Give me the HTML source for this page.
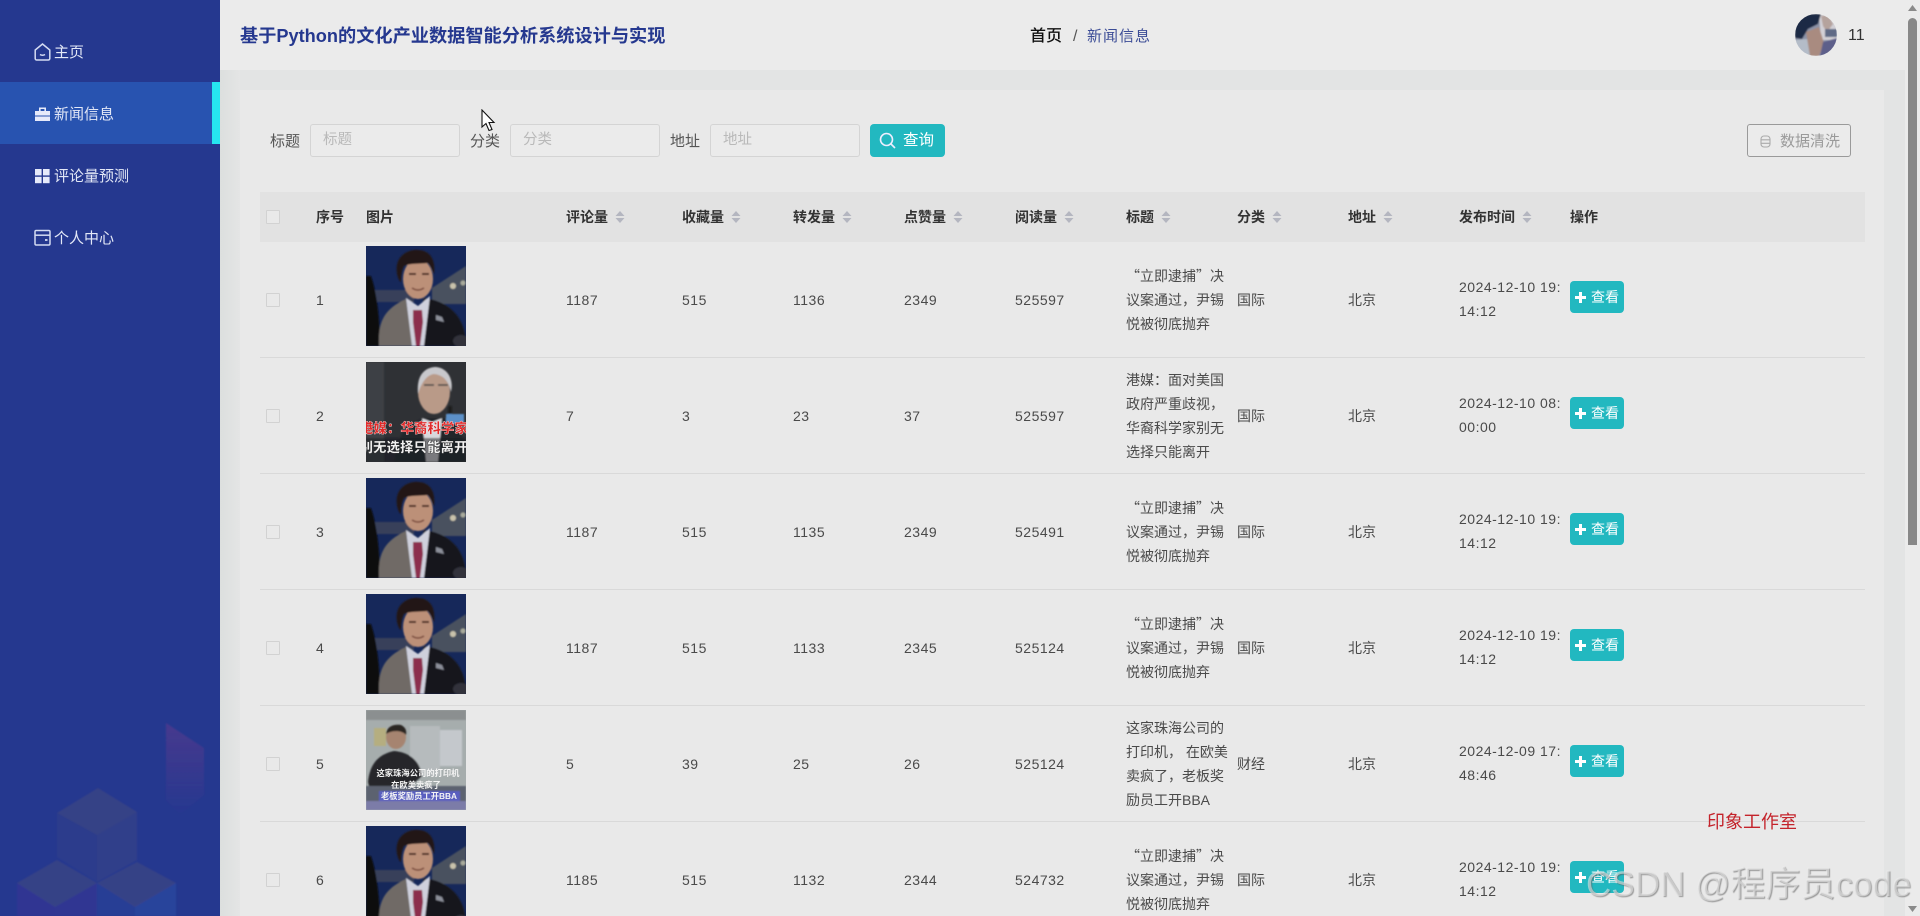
<!DOCTYPE html>
<html lang="zh-CN">
<head>
<meta charset="utf-8">
<title>新闻信息</title>
<style>
*{box-sizing:border-box}
html,body{margin:0;padding:0;width:1920px;height:916px;overflow:hidden;background:#e3e4e4;font-family:"Liberation Sans","Noto Sans CJK SC",sans-serif;font-size:14px;color:#4a4a4a}
.a{position:absolute;white-space:nowrap}
#side{left:0;top:0;width:220px;height:916px;background:#25388f;overflow:hidden}
.nav{position:absolute;left:0;width:220px;height:62px;line-height:65px;color:#e3e8f7;font-size:15px;padding-left:54px}
.nav.on{background:#2853b0}
.nav.on:after{content:"";position:absolute;right:0;top:0;width:8px;height:62px;background:#26e6f0}
.nav svg{position:absolute;left:34px;top:23px}
#shade{left:220px;top:70px;width:20px;height:846px;background:linear-gradient(90deg,#dcdfde,#e4e5e5)}
#head{left:220px;top:0;width:1685px;height:70px;background:#ebebeb}
#card{left:240px;top:90px;width:1644px;height:826px;background:#e9e9e9}
.lbl{position:absolute;top:124px;height:33px;line-height:36px;color:#555;font-size:15px}
.inp{position:absolute;top:124px;width:150px;height:33px;border:1px solid #d4d4d4;border-radius:3px;line-height:31px;padding-left:12px;color:#b9b9b9;background:#ebebeb;font-size:14.5px}
#thead{left:260px;top:192px;width:1605px;height:50px;background:#e2e2e2}
.th{position:absolute;top:192px;height:50px;line-height:51px;font-weight:bold;color:#333;font-size:14px}
.sort{display:inline-block;width:10px;height:14px;margin-left:7px;vertical-align:-2px}
.cb{position:absolute;left:266px;width:14px;height:14px;border:1px solid #d2d2d2;border-radius:1px;background:#e9e9e9}
.rl{position:absolute;left:260px;width:1605px;height:1px;background:#d9d9d9}
.c{position:absolute;line-height:24px;white-space:nowrap;color:#4a4a4a;letter-spacing:.5px}
.t{letter-spacing:0}
.q{letter-spacing:0;font-family:"Noto Sans CJK SC",sans-serif}
.btn{position:absolute;left:1570px;width:54px;height:32px;background:#22b8c0;border-radius:4px;color:#fff;font-size:14px;line-height:32px;padding-left:21px}
.btn i{position:absolute;left:5px;top:11px;width:11px;height:11px;background:linear-gradient(#fff,#fff) center/11px 3px no-repeat,linear-gradient(#fff,#fff) center/3px 11px no-repeat}
.img{position:absolute;left:366px;width:100px;height:100px;display:block}
</style>
</head>
<body>
<svg width="0" height="0" style="position:absolute">
<defs>
<filter id="b1"><feGaussianBlur stdDeviation="0.8"/></filter>
<filter id="b3"><feGaussianBlur stdDeviation="1.400"/></filter>
<linearGradient id="sh" x1="0" y1="0" x2="0" y2="1"><stop offset="0" stop-color="#7a3a8c" stop-opacity=".4"/><stop offset="1" stop-color="#7a3a8c" stop-opacity="0"/></linearGradient>
<symbol id="yoon" viewBox="0 0 100 100">
<rect width="100" height="100" fill="#16285a"/>
<g filter="url(#b1)">
<path d="M66 42L100 20V58H66Z" fill="#4a515f"/>
<path d="M8 44H48V56H8Z" fill="#38415a"/>
<path d="M0 30H5C12 50 14 80 14 100H0Z" fill="#0a0b10"/>
<path d="M58 52C80 55 100 68 100 100H42Z" fill="#15161f"/>
<path d="M13 100C12 78 16 64 40 53L47 100Z" fill="#6f6a66"/>
<path d="M40 52L52 60L64 50L58 100H46Z" fill="#cfd0dc"/>
<path d="M47 64H56L57 76L54 100H50L47 76Z" fill="#8c2f4d"/>
<ellipse cx="52" cy="33" rx="15" ry="20" fill="#bc9078"/>
<path d="M31 28C28 10 42 3 52 4C64 4 70 14 68 28C66 24 65 20 62 17C54 18 44 17 38 20C35 26 35 32 35 36C33 35 32 32 31 28Z" fill="#241516"/>
<path d="M43 28h7M56 28h7" stroke="#4a2a22" stroke-width="2"/>
<path d="M46 42q6 4 12 0" stroke="#7a4a3c" stroke-width="1.500" fill="none"/>
<path d="M70 69l6 2 2 5-8-2z" fill="#8c8f9a"/>
<circle cx="87" cy="40" r="3" fill="#c9c2ac"/><circle cx="97" cy="37" r="2.500" fill="#a9ab9c"/>
<ellipse cx="95" cy="95" rx="8" ry="6" fill="#30333a"/>
</g>
</symbol>
</defs>
</svg>

<div class="a" id="shade"></div>
<div class="a" id="head"></div>
<div class="a" id="card"></div>

<div class="a" id="side">
<svg width="220" height="916" style="position:absolute;left:0;top:0">
<g filter="url(#b1)">
<g fill="#807060">
<path d="M98 788L137 812L97 835L57 813Z" fill-opacity=".18"/>
<path d="M57 813L97 835V882L57 857Z" fill-opacity=".07"/>
<path d="M137 812V860L97 882V835Z" fill-opacity=".12"/>
<path d="M57 860L97 883L55 907L17 883Z" fill-opacity=".18"/>
<path d="M137 862L176 883L135 907L97 883Z" fill-opacity=".18"/>
</g>
<path d="M17 883L55 907V916H17Z" fill="#4a2f9a" fill-opacity=".3"/>
<path d="M55 907L97 883V916H55Z" fill="#4a2f9a" fill-opacity=".25"/>
<path d="M97 883L135 907V916H97Z" fill="#2a4aa0" fill-opacity=".35"/>
<path d="M135 907L176 883V916H135Z" fill="#2d4fa8" fill-opacity=".5"/>
<path d="M166 723L204 748V795L180 815L166 800Z" fill="url(#sh)"/>
</g>
</svg>
<div class="nav" style="top:20px"><svg width="17" height="18" viewBox="0 0 17 18" fill="none" stroke="#d4dbf2" stroke-width="1.500"><path d="M8.500 1L15.800 7V15.500A1.500 1.500 0 0 1 14.300 17H2.700A1.500 1.500 0 0 1 1.200 15.500V7Z"/><path d="M6 11.500Q8.500 13 11 11.500"/></svg>主页</div>
<div class="nav on" style="top:82px"><svg width="15" height="18" viewBox="0 0 15 18" fill="#e6eafa" style="left:35px"><path d="M4 6V2.500h7V6H9.400V4H5.600V6Z"/><path d="M0 6h15v4.500H0Z"/><path d="M0 11.500h15V16H0Z"/></svg>新闻信息</div>
<div class="nav" style="top:144px"><svg width="15" height="18" viewBox="0 0 15 18" fill="#e6eafa" style="left:35px"><rect x="0" y="2" width="6.600" height="6.400"/><rect x="8" y="2" width="6.600" height="6.400"/><rect x="0" y="9.800" width="6.600" height="6.400"/><rect x="8" y="9.800" width="6.600" height="6.400"/></svg>评论量预测</div>
<div class="nav" style="top:206px"><svg width="17" height="18" viewBox="0 0 17 18" fill="none" stroke="#d4dbf2" stroke-width="1.500"><rect x="1" y="1.500" width="15" height="14.500" rx="1.200"/><path d="M1 6.200H16"/><path d="M11 11h2.500" stroke-width="1.800"/></svg>个人中心</div>
</div>

<div class="a" style="left:240px;top:23px;line-height:26px;font-size:18.2px;font-weight:bold;color:#25388f">基于Python的文化产业数据智能分析系统设计与实现</div>
<div class="a" style="left:1030px;top:25px;line-height:24px;font-size:16px;font-weight:500;color:#111">首页</div>
<div class="a" style="left:1073px;top:25px;line-height:24px;font-size:16px;color:#555">/</div>
<div class="a" style="left:1087px;top:25px;line-height:24px;font-size:15px;letter-spacing:1px;color:#3b4c96;width:70px;overflow:hidden">新闻信息</div>
<svg class="a" style="left:1795px;top:14px" width="42" height="42" viewBox="0 0 42 42">
<defs><clipPath id="av"><circle cx="21" cy="21" r="21"/></clipPath></defs>
<g clip-path="url(#av)"><g filter="url(#b1)">
<rect width="42" height="42" fill="#8b93a8"/>
<path d="M24 0H42V26H26Z" fill="#d2d0d6"/>
<path d="M26 2L33 1L38 10L32 18L28 12Z" fill="#b5a39d"/>
<path d="M30 15H42V23H30Z" fill="#5f6a86"/>
<path d="M0 26L12 25L22 42H0Z" fill="#b4bcc8"/>
<path d="M11 18L24 13L29 29L24 42H15Z" fill="#a98b80"/>
<path d="M28 28L42 24V42H25Z" fill="#5d5f8a"/>
<path d="M0 0H26L23 10L13 15L7 25L0 24Z" fill="#1f2b44"/>
</g></g></svg>
<div class="a" style="left:1848px;top:26px;line-height:20px;font-size:16px;color:#333">11</div>

<svg class="a" style="left:481px;top:109px" width="15" height="23" viewBox="0 0 15 23"><path d="M1 1V18L5 14.500L8 21.500L11 20.500L8 13.500L13 13.500Z" fill="#fff" stroke="#111" stroke-width="1.100"/></svg>

<div class="lbl" style="left:270px">标题</div><div class="inp" style="left:310px">标题</div>
<div class="lbl" style="left:470px">分类</div><div class="inp" style="left:510px">分类</div>
<div class="lbl" style="left:670px">地址</div><div class="inp" style="left:710px">地址</div>
<div class="a" style="left:870px;top:124px;width:75px;height:33px;background:#22b8c0;border-radius:4px;color:#fff;line-height:33px;padding-left:33px;font-size:15.5px">查询<svg style="position:absolute;left:9px;top:8px" width="17" height="17" viewBox="0 0 17 17" fill="none" stroke="#eef" stroke-width="1.600"><circle cx="7.500" cy="7.500" r="6"/><path d="M12 12l4 4"/></svg></div>
<div class="a" style="left:1747px;top:124px;width:104px;height:33px;border:1px solid #9a9a9a;border-radius:3px;color:#9a9a9a;line-height:33px;padding-left:32px;font-size:15px;background:#ebebeb">数据清洗<svg style="position:absolute;left:12px;top:10px" width="11" height="13" viewBox="0 0 11 13" fill="none" stroke="#aaa" stroke-width="1.100"><rect x="1" y="1" width="9" height="11" rx="3"/><path d="M1 4.800H10M1 8.300H10"/></svg></div>

<div class="a" id="thead"></div>
<div class="cb" style="top:210px"></div>
<div class="th" style="left:316px">序号</div>
<div class="th" style="left:366px">图片</div>
<div class="th" style="left:566px">评论量<svg class="sort" viewBox="0 0 10 14"><path d="M5 1L9.500 6H.5ZM5 13L.5 8H9.500Z" fill="#b4b6c0"/></svg></div>
<div class="th" style="left:682px">收藏量<svg class="sort" viewBox="0 0 10 14"><path d="M5 1L9.500 6H.5ZM5 13L.5 8H9.500Z" fill="#b4b6c0"/></svg></div>
<div class="th" style="left:793px">转发量<svg class="sort" viewBox="0 0 10 14"><path d="M5 1L9.500 6H.5ZM5 13L.5 8H9.500Z" fill="#b4b6c0"/></svg></div>
<div class="th" style="left:904px">点赞量<svg class="sort" viewBox="0 0 10 14"><path d="M5 1L9.500 6H.5ZM5 13L.5 8H9.500Z" fill="#b4b6c0"/></svg></div>
<div class="th" style="left:1015px">阅读量<svg class="sort" viewBox="0 0 10 14"><path d="M5 1L9.500 6H.5ZM5 13L.5 8H9.500Z" fill="#b4b6c0"/></svg></div>
<div class="th" style="left:1126px">标题<svg class="sort" viewBox="0 0 10 14"><path d="M5 1L9.500 6H.5ZM5 13L.5 8H9.500Z" fill="#b4b6c0"/></svg></div>
<div class="th" style="left:1237px">分类<svg class="sort" viewBox="0 0 10 14"><path d="M5 1L9.500 6H.5ZM5 13L.5 8H9.500Z" fill="#b4b6c0"/></svg></div>
<div class="th" style="left:1348px">地址<svg class="sort" viewBox="0 0 10 14"><path d="M5 1L9.500 6H.5ZM5 13L.5 8H9.500Z" fill="#b4b6c0"/></svg></div>
<div class="th" style="left:1459px">发布时间<svg class="sort" viewBox="0 0 10 14"><path d="M5 1L9.500 6H.5ZM5 13L.5 8H9.500Z" fill="#b4b6c0"/></svg></div>
<div class="th" style="left:1570px">操作</div>

<!-- row 1 -->
<div class="cb" style="top:293px"></div>
<svg class="img" style="top:246px"><use href="#yoon" width="100" height="100"/></svg>
<div class="c" style="left:316px;top:288px">1</div><div class="c" style="left:566px;top:288px">1187</div><div class="c" style="left:682px;top:288px">515</div><div class="c" style="left:793px;top:288px">1136</div><div class="c" style="left:904px;top:288px">2349</div><div class="c" style="left:1015px;top:288px">525597</div>
<div class="c q" style="left:1126px;top:264px">“立即逮捕”决<br>议案通过，尹锡<br>悦被彻底抛弃</div>
<div class="c t" style="left:1237px;top:288px">国际</div><div class="c t" style="left:1348px;top:288px">北京</div>
<div class="c" style="left:1459px;top:275px">2024-12-10 19:<br>14:12</div>
<div class="btn" style="top:281px"><i></i>查看</div>
<div class="rl" style="top:357px"></div>

<!-- row 2 -->
<div class="cb" style="top:409px"></div>
<svg class="img" style="top:362px" viewBox="0 0 100 100">
<rect width="100" height="100" fill="#2f3135"/>
<g filter="url(#b1)">
<rect x="0" width="18" height="100" fill="#3d3f44"/>
<path d="M28 100C30 72 42 62 58 56L80 56C94 62 100 78 100 100Z" fill="#23252c"/>
<path d="M56 56L66 60L76 56L72 100H60Z" fill="#d8d8dc"/>
<ellipse cx="68" cy="30" rx="16" ry="22" fill="#b99a88"/>
<path d="M52 32C50 12 60 5 70 5C82 6 88 18 85 30C83 20 78 13 68 12C60 13 55 22 52 32Z" fill="#c8c8cc"/>
<path d="M58 23h10M72 23h10" stroke="#444" stroke-width="1.400"/>
<rect x="80" y="52" width="18" height="10" fill="#5b90c8"/>
<rect x="82" y="44" width="4" height="8" fill="#1a1a1a"/>
<rect x="0" y="76" width="100" height="24" fill="#1c1c20" opacity=".5"/>
</g>
<text x="-6" y="71" font-family="'Noto Sans CJK SC',sans-serif" font-size="13.500" font-weight="900" fill="#e02a2a" stroke="#fff" stroke-width=".3">港媒：华裔科学家</text>
<text x="-6.500" y="90" font-family="'Noto Sans CJK SC',sans-serif" font-size="13.500" font-weight="900" fill="#f2f2f2" stroke="#111" stroke-width=".3">别无选择只能离开</text>
</svg>
<div class="c" style="left:316px;top:404px">2</div><div class="c" style="left:566px;top:404px">7</div><div class="c" style="left:682px;top:404px">3</div><div class="c" style="left:793px;top:404px">23</div><div class="c" style="left:904px;top:404px">37</div><div class="c" style="left:1015px;top:404px">525597</div>
<div class="c t" style="left:1126px;top:368px">港媒：面对美国<br>政府严重歧视，<br>华裔科学家别无<br>选择只能离开</div>
<div class="c t" style="left:1237px;top:404px">国际</div><div class="c t" style="left:1348px;top:404px">北京</div>
<div class="c" style="left:1459px;top:391px">2024-12-10 08:<br>00:00</div>
<div class="btn" style="top:397px"><i></i>查看</div>
<div class="rl" style="top:473px"></div>

<!-- row 3 -->
<div class="cb" style="top:525px"></div>
<svg class="img" style="top:478px"><use href="#yoon" width="100" height="100"/></svg>
<div class="c" style="left:316px;top:520px">3</div><div class="c" style="left:566px;top:520px">1187</div><div class="c" style="left:682px;top:520px">515</div><div class="c" style="left:793px;top:520px">1135</div><div class="c" style="left:904px;top:520px">2349</div><div class="c" style="left:1015px;top:520px">525491</div>
<div class="c q" style="left:1126px;top:496px">“立即逮捕”决<br>议案通过，尹锡<br>悦被彻底抛弃</div>
<div class="c t" style="left:1237px;top:520px">国际</div><div class="c t" style="left:1348px;top:520px">北京</div>
<div class="c" style="left:1459px;top:507px">2024-12-10 19:<br>14:12</div>
<div class="btn" style="top:513px"><i></i>查看</div>
<div class="rl" style="top:589px"></div>

<!-- row 4 -->
<div class="cb" style="top:641px"></div>
<svg class="img" style="top:594px"><use href="#yoon" width="100" height="100"/></svg>
<div class="c" style="left:316px;top:636px">4</div><div class="c" style="left:566px;top:636px">1187</div><div class="c" style="left:682px;top:636px">515</div><div class="c" style="left:793px;top:636px">1133</div><div class="c" style="left:904px;top:636px">2345</div><div class="c" style="left:1015px;top:636px">525124</div>
<div class="c q" style="left:1126px;top:612px">“立即逮捕”决<br>议案通过，尹锡<br>悦被彻底抛弃</div>
<div class="c t" style="left:1237px;top:636px">国际</div><div class="c t" style="left:1348px;top:636px">北京</div>
<div class="c" style="left:1459px;top:623px">2024-12-10 19:<br>14:12</div>
<div class="btn" style="top:629px"><i></i>查看</div>
<div class="rl" style="top:705px"></div>

<!-- row 5 -->
<div class="cb" style="top:757px"></div>
<svg class="img" style="top:710px" viewBox="0 0 100 100">
<rect width="100" height="100" fill="#a6adad"/>
<g filter="url(#b1)">
<rect width="100" height="10" fill="#8b8f90"/>
<rect x="8" y="18" width="12" height="18" fill="#b5ae80"/>
<rect x="70" y="20" width="26" height="36" fill="#c4c8cc"/>
<rect x="44" y="16" width="30" height="50" fill="#b6bbbd"/>
<path d="M2 72C4 52 14 44 28 41C42 42 54 50 56 66L40 80H4Z" fill="#25272b"/>
<ellipse cx="30" cy="27" rx="10" ry="12" fill="#a68470"/>
<path d="M20 24C21 16 28 14 35 15C39 17 41 20 40 25C36 20 26 20 20 24Z" fill="#2a2523"/>
<rect x="0" y="76" width="100" height="24" fill="#5c6270"/>
<rect x="0" y="91" width="100" height="9" fill="#7c7ca8"/>
<rect x="13" y="81" width="81" height="10" fill="#5a5fc0"/>
</g>
<text x="52" y="66" text-anchor="middle" font-family="'Noto Sans CJK SC',sans-serif" font-size="8.300" font-weight="700" fill="#f4f4f4">这家珠海公司的打印机</text>
<text x="50" y="78" text-anchor="middle" font-family="'Noto Sans CJK SC',sans-serif" font-size="8.300" font-weight="700" fill="#f4f4f4">在欧美卖疯了</text>
<text x="53" y="89" text-anchor="middle" font-family="'Liberation Sans','Noto Sans CJK SC',sans-serif" font-size="8.300" font-weight="700" fill="#f4f4f4">老板奖励员工开BBA</text>
</svg>
<div class="c" style="left:316px;top:752px">5</div><div class="c" style="left:566px;top:752px">5</div><div class="c" style="left:682px;top:752px">39</div><div class="c" style="left:793px;top:752px">25</div><div class="c" style="left:904px;top:752px">26</div><div class="c" style="left:1015px;top:752px">525124</div>
<div class="c t" style="left:1126px;top:716px">这家珠海公司的<br>打印机， 在欧美<br>卖疯了，老板奖<br>励员工开BBA</div>
<div class="c t" style="left:1237px;top:752px">财经</div><div class="c t" style="left:1348px;top:752px">北京</div>
<div class="c" style="left:1459px;top:739px">2024-12-09 17:<br>48:46</div>
<div class="btn" style="top:745px"><i></i>查看</div>
<div class="rl" style="top:821px"></div>

<!-- row 6 -->
<div class="cb" style="top:873px"></div>
<svg class="img" style="top:826px;height:90px" viewBox="0 0 100 90"><use href="#yoon" width="100" height="100"/></svg>
<div class="c" style="left:316px;top:868px">6</div><div class="c" style="left:566px;top:868px">1185</div><div class="c" style="left:682px;top:868px">515</div><div class="c" style="left:793px;top:868px">1132</div><div class="c" style="left:904px;top:868px">2344</div><div class="c" style="left:1015px;top:868px">524732</div>
<div class="c q" style="left:1126px;top:844px;height:72px;overflow:hidden">“立即逮捕”决<br>议案通过，尹锡<br>悦被彻底抛弃</div>
<div class="c t" style="left:1237px;top:868px">国际</div><div class="c t" style="left:1348px;top:868px">北京</div>
<div class="c" style="left:1459px;top:855px">2024-12-10 19:<br>14:12</div>
<div class="btn" style="top:861px"><i></i>查看</div>

<!-- scrollbar -->
<div class="a" style="left:1905px;top:0;width:15px;height:916px;background:#ebebeb"></div>
<div class="a" style="left:1908px;top:18px;width:9px;height:527px;background:#888;border-radius:5px 5px 0 0"></div>
<svg class="a" style="left:1908px;top:5px" width="9" height="6"><path d="M4.500 0L9 6H0Z" fill="#8a8a8a"/></svg>
<svg class="a" style="left:1908px;top:906px" width="9" height="6"><path d="M0 0H9L4.500 6Z" fill="#8a8a8a"/></svg>

<!-- watermarks -->
<div class="a" style="left:1707px;top:810px;line-height:24px;font-size:18px;color:#c4232b">印象工作室</div>
<div class="a" style="left:1586px;top:864px;line-height:42px;font-size:35px;color:rgba(240,240,240,.55);text-shadow:1px 1px 1px rgba(90,90,90,.55)">CSDN @程序员code</div>
</body>
</html>
